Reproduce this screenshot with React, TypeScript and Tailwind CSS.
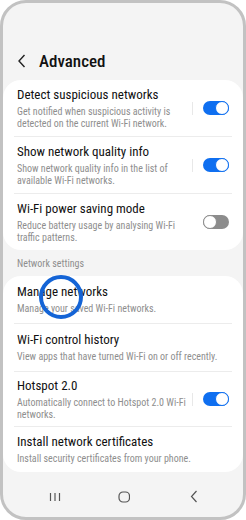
import React from "react";

function Toggle({ on }: { on: boolean }) {
  return on ? (
    <div className="relative w-[26px] h-[14px] rounded-full bg-[#0f6ff0]">
      <div className="absolute right-0 top-0 w-[14px] h-[14px] rounded-full bg-white border-[1.5px] border-[#0f6ff0]" />
    </div>
  ) : (
    <div className="relative w-[26px] h-[14px] rounded-full bg-[#8c8c8c]">
      <div className="absolute left-0 top-0 w-[14px] h-[14px] rounded-full bg-white border-[1.5px] border-[#8c8c8c]" />
    </div>
  );
}

function Row({
  title,
  sub,
  toggle,
  divider,
  h,
}: {
  title: string;
  sub: string[];
  toggle?: boolean;
  divider?: boolean;
  h: string;
}) {
  return (
    <div className={`flex flex-col ${h}`}>
      <div className="flex flex-1 items-center pl-[14px] pr-[14px]">
        <div className="flex-1 flex flex-col">
          <div className="text-[13px] leading-[16px] text-[#111111] whitespace-nowrap">{title}</div>
          <div className="mt-[3px] text-[10px] leading-[12px] text-[#8e8e8e] whitespace-nowrap">
            {sub.map((s, i) => (
              <div key={i}>{s}</div>
            ))}
          </div>
        </div>
        {toggle !== undefined && (
          <div className="flex items-center">
            <div className={`w-px h-[13px] mr-[10px] ${toggle ? "bg-[#e8e8e8]" : "bg-transparent"}`} />
            <Toggle on={toggle} />
          </div>
        )}
      </div>
      {divider && <div className="mx-[11px] h-px bg-[#ececec]" />}
    </div>
  );
}

export default function App() {
  return (
    <div className="w-[246px] h-[520px] bg-white font-['Roboto_Condensed','Roboto',sans-serif]">
      <div className="relative w-[246px] h-[520px] rounded-[26px] border-[3px] border-[#c2c2c2] bg-[#f4f4f4] overflow-hidden flex flex-col">
        <div className="h-[77px] flex items-end pb-[9px] pl-[14px]">
          <svg width="10" height="14" viewBox="0 0 10 14" className="mb-[3px]">
            <path d="M7.5 1 L2 7 L7.5 13" fill="none" stroke="#222" strokeWidth="1.4" />
          </svg>
          <div className="ml-[12px] text-[17px] leading-[20px] font-medium text-[#111111]">Advanced</div>
        </div>
        <div className="bg-white rounded-[18px]">
          <Row
            h="h-[57px]"
            title="Detect suspicious networks"
            sub={["Get notified when suspicious activity is", "detected on the current Wi-Fi network."]}
            toggle={true}
            divider
          />
          <Row
            h="h-[57px]"
            title="Show network quality info"
            sub={["Show network quality info in the list of", "available Wi-Fi networks."]}
            toggle={true}
            divider
          />
          <Row
            h="h-[56px]"
            title="Wi-Fi power saving mode"
            sub={["Reduce battery usage by analysing Wi-Fi", "traffic patterns."]}
            toggle={false}
          />
        </div>
        <div className="h-[26px] pl-[14px] flex items-center text-[10px] text-[#8e8e8e]">Network settings</div>
        <div className="relative bg-white rounded-[18px]">
          <Row h="h-[48px]" title="Manage networks" sub={["Manage your saved Wi-Fi networks."]} divider />
          <Row
            h="h-[48px]"
            title="Wi-Fi control history"
            sub={["View apps that have turned Wi-Fi on or off recently."]}
            divider
          />
          <Row
            h="h-[55px]"
            title="Hotspot 2.0"
            sub={["Automatically connect to Hotspot 2.0 Wi-Fi", "networks."]}
            toggle={true}
            divider
          />
          <Row h="h-[45px]" title="Install network certificates" sub={["Install security certificates from your phone."]} />
          <div className="absolute left-[36px] top-[-1px] w-[44px] h-[44px] rounded-full border-4 border-[#1464d6]" />
        </div>
        <div className="flex-1 flex items-center justify-between pl-[46px] pr-[45px] pt-[4px]">
          <svg width="12" height="10" viewBox="0 0 12 10">
            <path d="M1.5 1 V9 M6 1 V9 M10.5 1 V9" stroke="#555" strokeWidth="1.2" />
          </svg>
          <svg width="12" height="12" viewBox="0 0 12 12" className="-ml-[3px]">
            <rect x="1" y="1" width="10.5" height="10" rx="4" fill="none" stroke="#555" strokeWidth="1.2" />
          </svg>
          <svg width="8" height="13" viewBox="0 0 8 13">
            <path d="M6.5 1 L1.5 6.5 L6.5 12" fill="none" stroke="#555" strokeWidth="1.2" />
          </svg>
        </div>
      </div>
    </div>
  );
}
